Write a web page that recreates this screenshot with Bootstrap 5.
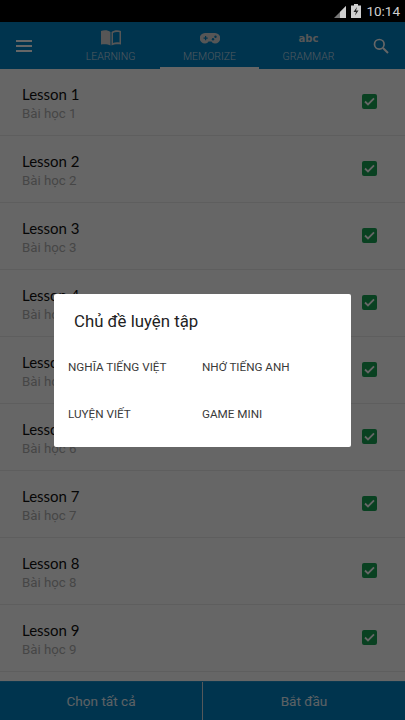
<!DOCTYPE html>
<html lang="vi">
<head>
<meta charset="utf-8">
<meta name="viewport" content="width=device-width, initial-scale=1">
<title>Memorize</title>
<link href="https://cdn.jsdelivr.net/npm/bootstrap@5.3.0/dist/css/bootstrap.min.css" rel="stylesheet">
<style>
html,body{margin:0;background:#000}
.app-shell{width:405px;height:720px;overflow:hidden;background:#fff;font-family:Roboto,sans-serif}
.status-strip{height:22px;background:#000;color:#cfcfcf;font-size:13.5px;padding:1px 5px 0 0;position:relative;z-index:3;line-height:21px}
.status-strip svg{display:block}
.signal-glyph{margin-right:5px}
.battery-glyph{margin-right:5px;margin-top:-1px}
.top-bar{height:47px;background:#0082c4;padding:0}
.menu-slot{width:47px;height:47px}
.search-slot{width:47px;height:47px;padding-right:2px}
.tab-group{margin-left:14px}
.tab-slot{width:99px;height:47px;color:#c4dcea;font-size:10.5px;font-weight:300;line-height:12px;padding-top:8px}
.tab-slot svg{display:block}
.tab-glyph{height:16px;margin-bottom:5px}
.abc-glyph{font-family:"DejaVu Sans",sans-serif;font-weight:700;font-size:10px;line-height:16px;color:#d8d8d8;padding-top:1px}
.tab-active{border-bottom:2px solid #fff}
.lesson-list{flex:1 1 auto;min-height:0;overflow:hidden}
.lesson-row{height:67px;border-bottom:1px solid #ebebeb;padding:0 28px 1px 22px}
.lesson-text{margin-top:4px}
.lesson-name{font-family:Lato,sans-serif;font-size:15px;line-height:20px;color:#111}
.lesson-sub{font-size:13.25px;line-height:20px;color:#b0b0b0}
.tick-box{width:15px;height:15px;border-radius:2px;background:#17a254}
.foot-bar{height:39px;background:#0082c4;border-top:1px solid #1b8fca}
.foot-btn{font-size:13.6px;color:#e6f3fa;height:38px}
.foot-first{width:203px;border-right:1px solid #d5dde2}
.foot-second{width:202px}
.scrim{top:22px;background:rgba(0,0,0,.6);z-index:2}
.dialog-box{width:297px;height:153px;background:#fff;border-radius:2px;margin-top:-1px}
.dialog-title{font-size:16.8px;line-height:24px;padding:15px 0 0 20px;color:#222}
.dialog-grid{padding:23px 0 0 14px;row-gap:25px}
.dialog-item{font-size:11.7px;line-height:22px;color:#3a3a3a;width:134px}
</style>
</head>
<body>
<div class="app-shell position-relative d-flex flex-column">
  <div class="status-strip d-flex justify-content-end align-items-center">
    <svg class="signal-glyph" width="12" height="12" viewBox="0 0 12 12"><path d="M0 12 12 0v12z" fill="#777"/><path d="M6 6 12 0v12H6z" fill="#cfcfcf"/></svg>
    <svg class="battery-glyph" width="10" height="14" viewBox="0 0 10 14"><path d="M3 0h4v1.500h3V14H0V1.500h3z" fill="#cfcfcf"/><path d="M6 3 2.500 8H5L4 11.500 7.500 6.500H5z" fill="#222"/></svg>
    <span>10:14</span>
  </div>
  <nav class="top-bar d-flex align-items-stretch flex-shrink-0">
    <div class="menu-slot d-flex align-items-center justify-content-center">
      <svg width="18" height="12" viewBox="0 0 18 12"><path d="M1 0h16v2H1zM1 5h16v2H1zM1 10h16v2H1z" fill="#fff"/></svg>
    </div>
    <div class="tab-group d-flex">
      <div class="tab-slot text-center d-flex flex-column align-items-center">
        <svg class="tab-glyph" width="20" height="16" viewBox="0 0 20 16"><path d="M0 1C3 0 7 0 9.500 2V15.500C7 14 3 14 0 14.500z" fill="#d8d8d8"/><path fill-rule="evenodd" d="M10.500 2C13 0 17 0 20 1V14.500C17 14 13 14 10.500 15.500zM12 3V13C14 12.200 16.500 12.100 18.500 12.600V2.300C16 1.800 13.500 2 12 3z" fill="#d8d8d8"/></svg>
        <span>LEARNING</span>
      </div>
      <div class="tab-slot tab-active text-center d-flex flex-column align-items-center">
        <svg class="tab-glyph" width="20" height="16" viewBox="0 -1 20 16"><path d="M5 2h10a5 5 0 0 1 0 10.500c-1.800 0-2.800-1-3.500-2h-3c-.7 1-1.700 2-3.500 2A5 5 0 0 1 5 2z" fill="#d8d8d8"/><path d="M3.500 6.500h1.500V5h1.200v1.500h1.500v1.200H6.200v1.500H5V7.700H3.500z" fill="#0082c4"/><circle cx="13" cy="8.200" r="1.200" fill="#0082c4"/><circle cx="15.500" cy="5.800" r="1.200" fill="#0082c4"/></svg>
        <span>MEMORIZE</span>
      </div>
      <div class="tab-slot text-center d-flex flex-column align-items-center">
        <div class="tab-glyph abc-glyph">abc</div>
        <span>GRAMMAR</span>
      </div>
    </div>
    <div class="search-slot ms-auto d-flex align-items-center justify-content-center">
      <svg width="16" height="16" viewBox="0 0 16 16"><circle cx="6.300" cy="6.300" r="4.800" fill="none" stroke="#fff" stroke-width="1.700"/><path d="M10 10l5 5" stroke="#fff" stroke-width="2"/></svg>
    </div>
  </nav>
  <div class="lesson-list">
    <div class="lesson-row d-flex align-items-center justify-content-between"><div class="lesson-text"><div class="lesson-name">Lesson 1</div><div class="lesson-sub">Bài học 1</div></div><div class="tick-box d-flex align-items-center justify-content-center"><svg width="11" height="9" viewBox="0 0 11 9"><path d="M1 4.500l3 3L10 1.300" fill="none" stroke="#fff" stroke-width="1.800"/></svg></div></div>
    <div class="lesson-row d-flex align-items-center justify-content-between"><div class="lesson-text"><div class="lesson-name">Lesson 2</div><div class="lesson-sub">Bài học 2</div></div><div class="tick-box d-flex align-items-center justify-content-center"><svg width="11" height="9" viewBox="0 0 11 9"><path d="M1 4.500l3 3L10 1.300" fill="none" stroke="#fff" stroke-width="1.800"/></svg></div></div>
    <div class="lesson-row d-flex align-items-center justify-content-between"><div class="lesson-text"><div class="lesson-name">Lesson 3</div><div class="lesson-sub">Bài học 3</div></div><div class="tick-box d-flex align-items-center justify-content-center"><svg width="11" height="9" viewBox="0 0 11 9"><path d="M1 4.500l3 3L10 1.300" fill="none" stroke="#fff" stroke-width="1.800"/></svg></div></div>
    <div class="lesson-row d-flex align-items-center justify-content-between"><div class="lesson-text"><div class="lesson-name">Lesson 4</div><div class="lesson-sub">Bài học 4</div></div><div class="tick-box d-flex align-items-center justify-content-center"><svg width="11" height="9" viewBox="0 0 11 9"><path d="M1 4.500l3 3L10 1.300" fill="none" stroke="#fff" stroke-width="1.800"/></svg></div></div>
    <div class="lesson-row d-flex align-items-center justify-content-between"><div class="lesson-text"><div class="lesson-name">Lesson 5</div><div class="lesson-sub">Bài học 5</div></div><div class="tick-box d-flex align-items-center justify-content-center"><svg width="11" height="9" viewBox="0 0 11 9"><path d="M1 4.500l3 3L10 1.300" fill="none" stroke="#fff" stroke-width="1.800"/></svg></div></div>
    <div class="lesson-row d-flex align-items-center justify-content-between"><div class="lesson-text"><div class="lesson-name">Lesson 6</div><div class="lesson-sub">Bài học 6</div></div><div class="tick-box d-flex align-items-center justify-content-center"><svg width="11" height="9" viewBox="0 0 11 9"><path d="M1 4.500l3 3L10 1.300" fill="none" stroke="#fff" stroke-width="1.800"/></svg></div></div>
    <div class="lesson-row d-flex align-items-center justify-content-between"><div class="lesson-text"><div class="lesson-name">Lesson 7</div><div class="lesson-sub">Bài học 7</div></div><div class="tick-box d-flex align-items-center justify-content-center"><svg width="11" height="9" viewBox="0 0 11 9"><path d="M1 4.500l3 3L10 1.300" fill="none" stroke="#fff" stroke-width="1.800"/></svg></div></div>
    <div class="lesson-row d-flex align-items-center justify-content-between"><div class="lesson-text"><div class="lesson-name">Lesson 8</div><div class="lesson-sub">Bài học 8</div></div><div class="tick-box d-flex align-items-center justify-content-center"><svg width="11" height="9" viewBox="0 0 11 9"><path d="M1 4.500l3 3L10 1.300" fill="none" stroke="#fff" stroke-width="1.800"/></svg></div></div>
    <div class="lesson-row d-flex align-items-center justify-content-between"><div class="lesson-text"><div class="lesson-name">Lesson 9</div><div class="lesson-sub">Bài học 9</div></div><div class="tick-box d-flex align-items-center justify-content-center"><svg width="11" height="9" viewBox="0 0 11 9"><path d="M1 4.500l3 3L10 1.300" fill="none" stroke="#fff" stroke-width="1.800"/></svg></div></div>
  </div>
  <div class="foot-bar d-flex flex-shrink-0">
    <div class="foot-btn foot-first d-flex align-items-center justify-content-center">Chọn tất cả</div>
    <div class="foot-btn foot-second d-flex align-items-center justify-content-center">Bắt đầu</div>
  </div>
  <div class="scrim position-absolute start-0 end-0 bottom-0 d-flex align-items-center justify-content-center">
    <div class="dialog-box">
      <div class="dialog-title">Chủ đề luyện tập</div>
      <div class="dialog-grid d-flex flex-wrap">
        <div class="dialog-item">NGHĨA TIẾNG VIỆT</div>
        <div class="dialog-item">NHỚ TIẾNG ANH</div>
        <div class="dialog-item">LUYỆN VIẾT</div>
        <div class="dialog-item">GAME MINI</div>
      </div>
    </div>
  </div>
</div>
<script src="https://cdn.jsdelivr.net/npm/bootstrap@5.3.0/dist/js/bootstrap.bundle.min.js"></script>
</body>
</html>
